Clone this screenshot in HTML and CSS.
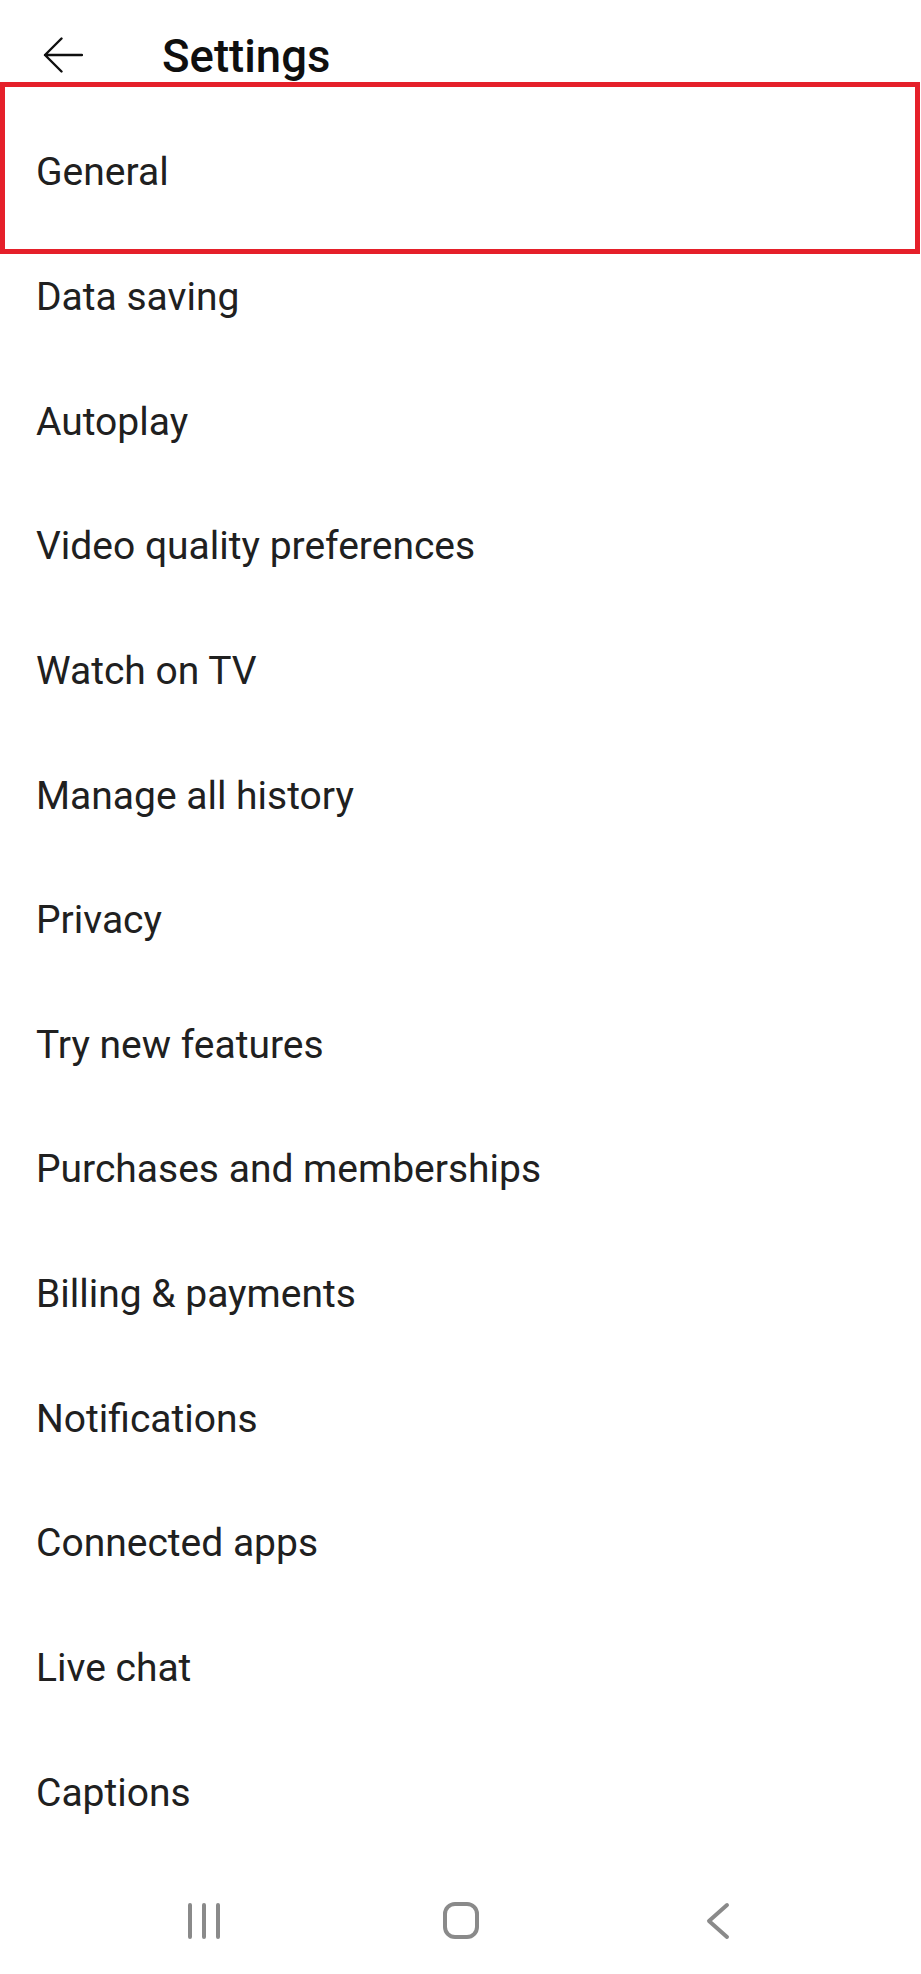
FILE: index.html
```html
<!DOCTYPE html>
<html lang="en">
<head>
    <meta charset="UTF-8">
    <title>Settings</title>
    <link rel="stylesheet" href="styles.css">
</head>
<body>
    <div id="screen">
        <div id="top-bar">
            <button id="back-button" aria-label="Back">
                <svg width="40" height="36" viewBox="0 0 40 36">
                    <path d="M39 18H2M18.5 1.5L2 18l16.5 16.5" fill="none" stroke="#0f0f0f" stroke-width="2.4" stroke-linecap="round" stroke-linejoin="round"/>
                </svg>
            </button>
            <h1 id="page-title">Settings</h1>
        </div>

        <!-- Settings list -->
        <div id="settings-list">
            <div class="setting-row selected">General</div>
            <div class="setting-row">Data saving</div>
            <div class="setting-row">Autoplay</div>
            <div class="setting-row">Video quality preferences</div>
            <div class="setting-row">Watch on TV</div>
            <div class="setting-row">Manage all history</div>
            <div class="setting-row">Privacy</div>
            <div class="setting-row">Try new features</div>
            <div class="setting-row">Purchases and memberships</div>
            <div class="setting-row">Billing &amp; payments</div>
            <div class="setting-row">Notifications</div>
            <div class="setting-row">Connected apps</div>
            <div class="setting-row">Live chat</div>
            <div class="setting-row">Captions</div>
        </div>

        <!-- System navigation bar -->
        <div id="nav-bar">
            <div class="nav-key">
                <svg width="34" height="36" viewBox="0 0 34 36">
                    <path d="M3 2v32M17 2v32M31 2v32" stroke="#8a8a8a" stroke-width="4" stroke-linecap="round"/>
                </svg>
            </div>
            <div class="nav-key">
                <svg width="38" height="38" viewBox="0 0 38 38">
                    <rect x="3" y="2" width="32" height="33" rx="10" fill="none" stroke="#8a8a8a" stroke-width="4"/>
                </svg>
            </div>
            <div class="nav-key">
                <svg width="24" height="38" viewBox="0 0 24 38">
                    <path d="M21 3L3 19l18 16" fill="none" stroke="#8a8a8a" stroke-width="4" stroke-linecap="round" stroke-linejoin="round"/>
                </svg>
            </div>
        </div>
    </div>
</body>
</html>
```

FILE: styles.css
```css
body {
    margin: 0;
    padding: 0;
    background-color: #fff;
    font-family: Roboto, "Noto Sans", sans-serif;
    color: #0f0f0f;
}
#screen {
    display: flex;
    flex-direction: column;
    height: 1974px;
    width: 921px;
    overflow: hidden;
}
#top-bar {
    display: flex;
    align-items: center;
    height: 109px;
    padding-left: 43px;
    flex-shrink: 0;
}
#back-button {
    background: none;
    border: none;
    padding: 0;
    display: flex;
    cursor: pointer;
}
#page-title {
    margin: 4px 0 0 79px;
    font-size: 45.5px;
    font-weight: 500;
    color: #0f0f0f;
}
#settings-list {
    display: flex;
    flex-direction: column;
    padding-top: 1px;
}
.setting-row {
    display: flex;
    align-items: center;
    height: 124.65px;
    padding-left: 36px;
    font-size: 39px;
    color: #202020;
    flex-shrink: 0;
}
/* red highlight drawn over the selected row */
.setting-row.selected {
    position: relative;
}
.setting-row.selected::after {
    content: "";
    position: absolute;
    left: 0;
    right: 1px;
    top: -28px;
    bottom: -19px;
    border: 5px solid #e5202a;
}
#nav-bar {
    flex: 1;
    display: flex;
    align-items: center;
    justify-content: center;
    gap: 197px;
    padding-top: 14px;
}
.nav-key {
    width: 60px;
    display: flex;
    justify-content: center;
}
```
